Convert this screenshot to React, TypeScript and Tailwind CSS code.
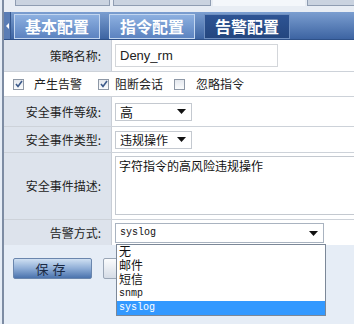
const labelCls =
  "w-[108px] shrink-0 bg-[#dde3ec] border-r border-[#c9ced6] flex items-center justify-end pr-[10px] text-[12px] text-[#222]";

const Arrow = () => (
  <svg width="9" height="5" viewBox="0 0 9 5" className="shrink-0">
    <path d="M0 0 H9 L4.5 5 Z" fill="#111" />
  </svg>
);

const Check = ({ checked }: { checked: boolean }) => (
  <span className="w-[11px] h-[11px] border border-[#8e98a6] bg-gradient-to-b from-[#e4e8ee] to-[#fbfcfd] flex items-center justify-center">
    {checked && (
      <svg width="8" height="8" viewBox="0 0 8 8">
        <path d="M1 4 L3 6.5 L7 1" stroke="#3c5a8a" strokeWidth="1.6" fill="none" />
      </svg>
    )}
  </span>
);

const Tab = ({ text, active }: { text: string; active?: boolean }) => (
  <div
    className={`w-[86px] h-[25px] flex items-center justify-center text-[16px] font-bold text-white border ${
      active
        ? "bg-gradient-to-b from-[#2e5494] to-[#24467f] border-[#6f8fc0]"
        : "bg-gradient-to-b from-[#8db0e0] to-[#5c83c0] border-[#c2d6f0]"
    }`}
  >
    {text}
  </div>
);

const options = ["无", "邮件", "短信", "snmp", "syslog"];

export default function App() {
  return (
    <div className="w-[354px] h-[324px] bg-[#e6edf6] relative overflow-hidden font-['Noto_Sans_CJK_SC',sans-serif] leading-none">
      {/* strip left over from the panel above */}
      <div className="h-[12px] flex bg-[#e8edf4] border-l-2 border-[#7d8ca3] ml-[2px]">
        <div className="ml-[11px] w-[95px] h-[6px] bg-[#cad3e0] border border-t-0 border-[#8f9db2]" />
        <div className="ml-[3px] w-[98px] h-[6px] bg-[#cad3e0] border border-t-0 border-[#8f9db2]" />
        <div className="ml-[2px] w-[92px] h-[6px] bg-[#f4f7fb]" />
        <div className="ml-[2px] flex-1 h-[6px] bg-[#cad3e0] border border-t-0 border-r-0 border-[#8f9db2]" />
      </div>

      <div className="ml-[2px] border-l-2 border-[#7d8ca3] flex flex-col">
        {/* tab bar */}
        <div className="h-[28px] flex items-center bg-gradient-to-b from-[#7b9ed0] to-[#3d64a2] border-b border-[#2e5189]">
          <div className="w-[7px] h-full flex items-center justify-center bg-[#5a7db5] border-r border-[#34578f]">
            <svg width="3" height="6" viewBox="0 0 3 6">
              <path d="M3 0 V6 L0 3 Z" fill="#fff" />
            </svg>
          </div>
          <div className="flex gap-[9px] ml-[3px] mt-[1px]">
            <Tab text="基本配置" />
            <Tab text="指令配置" />
            <Tab text="告警配置" active />
          </div>
        </div>

        {/* form */}
        <div className="flex flex-col">
          <div className="h-[32px] flex border-b border-[#cdd2d9]">
            <div className={labelCls}>策略名称:</div>
            <div className="flex-1 bg-white pl-[3px] pt-[4px]">
              <div className="w-[163px] h-[23px] border border-[#d3d6da] flex items-center pl-[4px] text-[13px] text-[#222] font-['Liberation_Sans',sans-serif]">
                Deny_rm
              </div>
            </div>
          </div>

          <div className="h-[25px] flex items-center bg-white border-b border-[#cdd2d9] pl-[9px] text-[12px] text-[#222]">
            <Check checked />
            <span className="ml-[10px]">产生告警</span>
            <span className="ml-[16px]"><Check checked /></span>
            <span className="ml-[6px]">阻断会话</span>
            <span className="ml-[11px]"><Check checked={false} /></span>
            <span className="ml-[11px]">忽略指令</span>
          </div>

          <div className="h-[30px] flex border-b border-[#cdd2d9]">
            <div className={labelCls}>安全事件等级:</div>
            <div className="flex-1 bg-white pl-[3px] flex items-center">
              <div className="w-[77px] h-[18px] border border-[#c4c9d0] flex items-center justify-between pl-[4px] pr-[5px] text-[13px] text-[#111]">
                高
                <Arrow />
              </div>
            </div>
          </div>

          <div className="h-[26px] flex border-b border-[#cdd2d9]">
            <div className={labelCls}>安全事件类型:</div>
            <div className="flex-1 bg-white pl-[3px] flex items-center">
              <div className="w-[77px] h-[18px] border border-[#c4c9d0] flex items-center justify-between pl-[4px] pr-[5px] text-[12px] text-[#111]">
                违规操作
                <Arrow />
              </div>
            </div>
          </div>

          <div className="h-[67px] flex border-b border-[#cdd2d9]">
            <div className={labelCls}>安全事件描述:</div>
            <div className="flex-1 bg-white pl-[3px] pt-[3px]">
              <div className="h-[59px] border border-r-0 border-[#c4c9d0] pl-[3px] pt-[3px] text-[12px] text-[#111]">
                字符指令的高风险违规操作
              </div>
            </div>
          </div>

          <div className="h-[25px] flex">
            <div className={labelCls}>告警方式:</div>
            <div className="flex-1 bg-white pl-[3px] pt-[3px]">
              <div className="w-[209px] h-[20px] border border-[#a9b3c0] flex items-center justify-between pl-[4px] pr-[5px] text-[10px] text-[#111] font-['Liberation_Mono',monospace]">
                syslog
                <Arrow />
              </div>
            </div>
          </div>
        </div>

        {/* buttons */}
        <div className="flex gap-[11px] pl-[9px] pt-[13px] h-[79px]">
          <button className="w-[79px] h-[21px] rounded-[2px] border border-[#6a86ad] bg-gradient-to-b from-[#cfe0f2] via-[#8eadd6] to-[#4b73ad] text-[13px] text-[#1b2a44] tracking-[4px]">
            保存
          </button>
          {/* second button: its label is covered by the open list */}
          <button className="w-[79px] h-[21px] rounded-[2px] border border-[#9aa6b6] bg-gradient-to-b from-[#fbfcfd] to-[#d5dce6]" />
        </div>
      </div>

      {/* open dropdown list */}
      <div className="absolute left-[116px] top-[244px] w-[210px] border border-[#7c8898] bg-white flex flex-col">
        {options.map((o) => (
          <div
            key={o}
            className={`h-[14px] pl-[2px] ${
              o === "syslog" ? "bg-[#3399ff] text-white" : "text-[#111]"
            } ${
              /^[a-z]/.test(o)
                ? "text-[10px] leading-[14px] font-['Liberation_Mono',monospace]"
                : "text-[12px] leading-[14px] font-['Liberation_Sans','Noto_Sans_CJK_SC',sans-serif]"
            }`}
          >
            {o}
          </div>
        ))}
      </div>
    </div>
  );
}
